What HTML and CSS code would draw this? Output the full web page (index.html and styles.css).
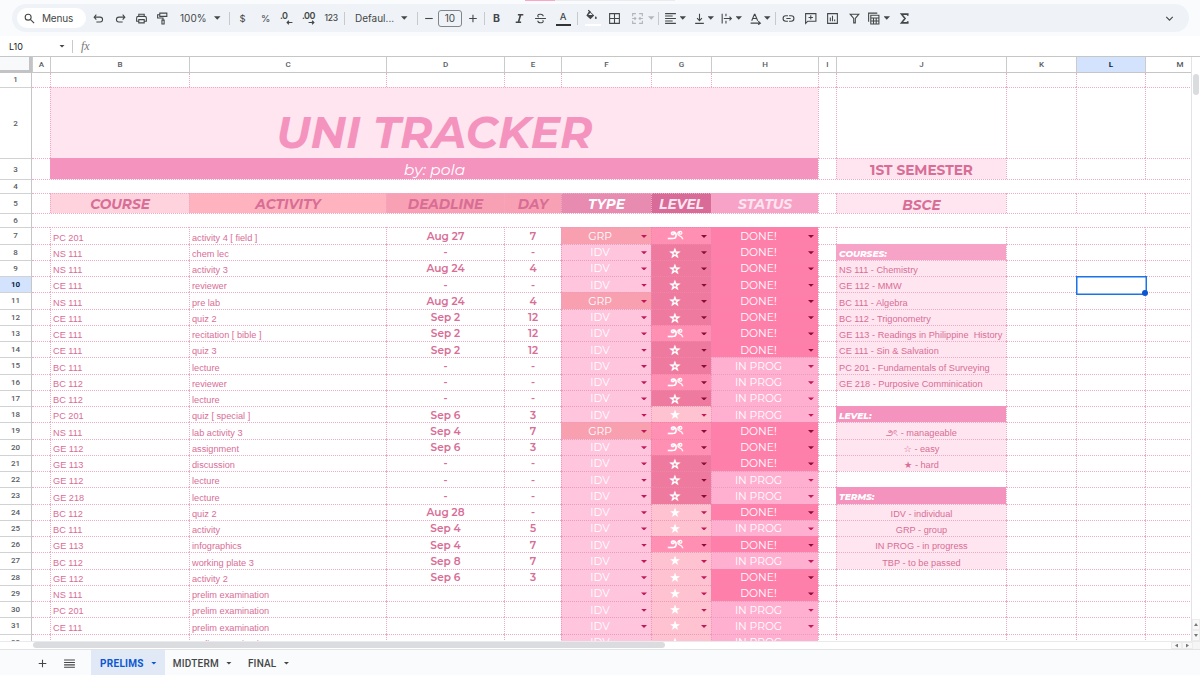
FILE: index.html
```html
<!DOCTYPE html>
<html lang="en">

<head>
    <meta charset="UTF-8">
    <meta name="viewport" content="width=device-width, initial-scale=1.0">
    <title>Uni Tracker</title>
    <link rel="stylesheet" href="styles.css">
</head>

<body>

<!-- Toolbar -->
<header class="top">
    <div class="load-bar"></div>
    <div class="toolbar">
        <div class="menus">
            <svg class="icon" viewBox="0 0 24 24"><circle cx="9.5" cy="9.5" r="5.5"/><path d="M14 14l6.5 6.5"/></svg>
            <span>Menus</span>
        </div>
        <svg class="icon" viewBox="0 0 24 24"><path d="M8 5L4 9.500l4 4.500M4.500 9.500H15a4.500 4.500 0 0 1 0 9H8"/></svg>
        <svg class="icon" viewBox="0 0 24 24"><path d="M16 5l4 4.500-4 4.500M19.500 9.500H9a4.500 4.500 0 0 0 0 9h7"/></svg>
        <svg class="icon" viewBox="0 0 24 24"><path d="M7 8V4h10v4M7 17H3v-6a3 3 0 0 1 3-3h12a3 3 0 0 1 3 3v6h-4M7 14h10v6H7z"/></svg>
        <svg class="icon" viewBox="0 0 24 24"><path d="M7 2h13v6H7zM7 5H3v6h10v4M11 15h4v7h-4z"/></svg>
        <span class="zoom">100%</span>
        <i class="arrow"></i>
        <i class="sep"></i>
        <span class="sym">$</span>
        <span class="sym">%</span>
        <span class="dec">.0<svg viewBox="0 0 12 8"><path d="M11 4H2M5 1L2 4l3 3"/></svg></span>
        <span class="dec">.00<svg viewBox="0 0 12 8"><path d="M1 4h9M7 1l3 3-3 3"/></svg></span>
        <span class="num">123</span>
        <i class="sep"></i>
        <span class="font">Defaul...</span>
        <i class="arrow"></i>
        <i class="sep"></i>
        <svg class="icon" viewBox="0 0 24 24"><path d="M4 12h14"/></svg>
        <span class="size">10</span>
        <svg class="icon" viewBox="0 0 24 24"><path d="M4 12h14M11 5v14"/></svg>
        <i class="sep"></i>
        <b class="bold">B</b>
        <svg class="icon thick" viewBox="0 0 24 24"><path d="M9 5h10M5 19h10M14 5l-4 14"/></svg>
        <svg class="icon" viewBox="0 0 24 24"><path d="M2 12h20M17 8c0-5-10-5-10-1 0 1 .5 2 1.500 2.500M7 16c0 5 10 5 10 1 0-1-.3-1.500-1-2"/></svg>
        <span class="color">A</span>
        <i class="sep"></i>
        <span class="fill"><svg class="icon" viewBox="0 0 24 24"><path class="solid" d="M8 3l9 9-7 7-7.500-7zM20 13c3 4 2 5.500 0 5.500s-3-1.500 0-5.500z"/><path d="M6 2l4 4"/><path class="hole" d="M6 11h8l-4-4z"/></svg></span>
        <svg class="icon" viewBox="0 0 24 24"><path d="M3 3h18v18H3zM12 3v18M3 12h18"/></svg>
        <svg class="icon off" viewBox="0 0 24 24"><path d="M3 8V3h6M15 3h6v5M3 16v5h6M15 21h6v-5M2 12h7M6.500 9.500L9 12l-2.500 2.500M22 12h-7M17.500 9.500L15 12l2.500 2.500"/></svg>
        <i class="arrow off"></i>
        <i class="sep"></i>
        <svg class="icon" viewBox="0 0 24 24"><path d="M2 3h20M2 7.500h14M2 12h20M2 16.500h14M2 21h20"/></svg>
        <i class="arrow"></i>
        <svg class="icon" viewBox="0 0 24 24"><path d="M4 21h16M12 3v13M7.500 11.500L12 16l4.500-4.500"/></svg>
        <i class="arrow"></i>
        <svg class="icon" viewBox="0 0 24 24"><path d="M4 3v18M11 3v5M11 16v5M7 12h14M17.500 8.500L21 12l-3.500 3.500"/></svg>
        <i class="arrow"></i>
        <svg class="icon" viewBox="0 0 24 24"><path d="M5 16l5-12h1l5 12M7 12h7M3 20.500h17M17 17l4 3.500-4 3"/></svg>
        <i class="arrow"></i>
        <i class="sep"></i>
        <svg class="icon" viewBox="0 0 24 24"><path d="M11 7H7a5 5 0 0 0 0 10h4M13 7h4a5 5 0 0 1 0 10h-4M8 12h8"/></svg>
        <svg class="icon" viewBox="0 0 24 24"><path d="M3 21V3h19v14H7zM12.500 6v8M8.500 10h8"/></svg>
        <svg class="icon" viewBox="0 0 24 24"><path d="M3 3h18v18H3zM8 10v7M12 7v10M16 14v3"/></svg>
        <svg class="icon" viewBox="0 0 24 24"><path d="M4 4h16l-6.500 8v8h-3v-8z"/></svg>
        <svg class="icon" viewBox="0 0 24 24"><path d="M3 18V2h16M7 6h15v16H7zM7 11h15M7 16.500h15M12 11v11M17 11v11"/></svg>
        <i class="arrow"></i>
        <svg class="icon sigma" viewBox="0 0 24 24"><path d="M18 7V4H6.500l6.500 8-6.500 8H18v-3"/></svg>
        <svg class="icon" viewBox="0 0 24 24"><path d="M6 9l6 6 6-6"/></svg>
    </div>
</header>

<!-- Formula bar -->
<div class="formula-bar">
    <span class="cell-name">L10</span>
    <i class="arrow"></i>
    <i class="sep"></i>
    <span class="fx">fx</span>
</div>

<!-- Sheet -->
<main class="sheet">
    <div class="grid" id="grid">
        <div class="row letters">
            <div class="corner"></div>
            <div>A</div><div>B</div><div>C</div><div>D</div><div>E</div><div>F</div><div>G</div>
            <div>H</div><div>I</div><div>J</div><div>K</div><div class="current">L</div><div>M</div>
        </div>
        <div class="row r1">
            <div class="head">1</div>
            <div></div><div></div><div></div><div></div><div></div><div></div><div></div>
            <div></div><div></div><div></div><div></div><div></div><div></div>
        </div>
        <div class="row r2">
            <div class="head">2</div>
            <div></div><div class="title"><h1>UNI TRACKER</h1></div>
            <div></div><div></div><div></div><div></div><div></div>
        </div>
        <div class="row r3">
            <div class="head">3</div>
            <div></div><div class="author">by: pola</div>
            <div></div><div class="semester">1ST SEMESTER</div><div></div><div></div><div></div>
        </div>
        <div class="row r4"><div class="head">4</div><div class="blank"></div></div>
        <div class="row r5">
            <div class="head">5</div>
            <div></div><div class="th course">COURSE</div><div class="th activity">ACTIVITY</div>
            <div class="th deadline">DEADLINE</div><div class="th deadline">DAY</div>
            <div class="th type">TYPE</div><div class="th level">LEVEL</div><div class="th status">STATUS</div>
            <div></div><div class="th program">BSCE</div><div></div><div></div><div></div>
        </div>
        <div class="row r6"><div class="head">6</div><div class="blank"></div></div>
    </div>
    <div class="v-scroll">
        <div class="v-thumb"></div>
        <div class="v-btn"><i class="up"></i></div>
        <div class="v-btn"><i class="down"></i></div>
    </div>
</main>

<div class="h-scroll">
    <div class="h-thumb"></div>
    <div class="h-btn"><i class="left"></i></div>
    <div class="h-btn"><i class="right"></i></div>
    <div class="h-end"></div>
</div>

<!-- Sheet tabs -->
<footer class="tabs">
    <svg class="icon" viewBox="0 0 24 24"><path d="M5 12h14M12 5v14"/></svg>
    <svg class="icon lines" viewBox="0 0 24 24"><path d="M2 5.500h20M2 10h20M2 14.500h20M2 19h20"/></svg>
    <div class="tab active">PRELIMS<i class="arrow"></i></div>
    <div class="tab">MIDTERM<i class="arrow"></i></div>
    <div class="tab">FINAL<i class="arrow"></i></div>
</footer>

<script>
    const BOW = '౨ৎ';

    // course, activity, deadline, day, type, level, status
    const tasks = [
        ['PC 201', 'activity 4 [ field ]', 'Aug 27', '7', 'GRP', 'bow', 'DONE!'],
        ['NS 111', 'chem lec', '-', '-', 'IDV', 'easy', 'DONE!'],
        ['NS 111', 'activity 3', 'Aug 24', '4', 'IDV', 'easy', 'DONE!'],
        ['CE 111', 'reviewer', '-', '-', 'IDV', 'easy', 'DONE!'],
        ['NS 111', 'pre lab', 'Aug 24', '4', 'GRP', 'easy', 'DONE!'],
        ['CE 111', 'quiz 2', 'Sep 2', '12', 'IDV', 'easy', 'DONE!'],
        ['CE 111', 'recitation [ bible ]', 'Sep 2', '12', 'IDV', 'bow', 'DONE!'],
        ['CE 111', 'quiz 3', 'Sep 2', '12', 'IDV', 'easy', 'DONE!'],
        ['BC 111', 'lecture', '-', '-', 'IDV', 'easy', 'IN PROG'],
        ['BC 112', 'reviewer', '-', '-', 'IDV', 'bow', 'IN PROG'],
        ['BC 112', 'lecture', '-', '-', 'IDV', 'easy', 'IN PROG'],
        ['PC 201', 'quiz [ special ]', 'Sep 6', '3', 'IDV', 'hard', 'IN PROG'],
        ['NS 111', 'lab activity 3', 'Sep 4', '7', 'GRP', 'bow', 'DONE!'],
        ['GE 112', 'assignment', 'Sep 6', '3', 'IDV', 'bow', 'DONE!'],
        ['GE 113', 'discussion', '-', '-', 'IDV', 'easy', 'DONE!'],
        ['GE 112', 'lecture', '-', '-', 'IDV', 'easy', 'IN PROG'],
        ['GE 218', 'lecture', '-', '-', 'IDV', 'easy', 'IN PROG'],
        ['BC 112', 'quiz 2', 'Aug 28', '-', 'IDV', 'hard', 'DONE!'],
        ['BC 111', 'activity', 'Sep 4', '5', 'IDV', 'hard', 'IN PROG'],
        ['GE 113', 'infographics', 'Sep 4', '7', 'IDV', 'bow', 'DONE!'],
        ['BC 112', 'working plate 3', 'Sep 8', '7', 'IDV', 'hard', 'IN PROG'],
        ['GE 112', 'activity 2', 'Sep 6', '3', 'IDV', 'hard', 'DONE!'],
        ['NS 111', 'prelim examination', '', '', 'IDV', 'hard', 'DONE!'],
        ['PC 201', 'prelim examination', '', '', 'IDV', 'hard', 'IN PROG'],
        ['CE 111', 'prelim examination', '', '', 'IDV', 'hard', 'IN PROG'],
        ['GE 112', 'prelim examination', '', '', 'IDV', 'hard', 'IN PROG']
    ];

    // Side column, keyed by row number
    const notes = {
        8: ['note-head light', 'COURSES:'],
        9: ['note', 'NS 111 - Chemistry'],
        10: ['note', 'GE 112 - MMW'],
        11: ['note', 'BC 111 - Algebra'],
        12: ['note', 'BC 112 - Trigonometry'],
        13: ['note', 'GE 113 - Readings in Philippine  History'],
        14: ['note', 'CE 111 - Sin & Salvation'],
        15: ['note', 'PC 201 - Fundamentals of Surveying'],
        16: ['note', 'GE 218 - Purposive Comminication'],
        18: ['note-head', 'LEVEL:'],
        19: ['note center', BOW + ' - manageable'],
        20: ['note center', '☆ - easy'],
        21: ['note center', '★ - hard'],
        23: ['note-head', 'TERMS:'],
        24: ['note center', 'IDV - individual'],
        25: ['note center', 'GRP - group'],
        26: ['note center', 'IN PROG - in progress'],
        27: ['note center', 'TBP - to be passed']
    };

    const levels = { bow: BOW, easy: '☆', hard: '★' };
    const grid = document.getElementById('grid');

    function addCell(row, className, text) {
        const cell = document.createElement('div');
        cell.className = className;
        const label = document.createElement('span');
        label.textContent = text;
        cell.appendChild(label);
        row.appendChild(cell);
        return cell;
    }

    function addDropdown(row, className, text) {
        const cell = addCell(row, 'drop ' + className, text);
        const arrow = document.createElement('i');
        arrow.className = 'arrow';
        cell.appendChild(arrow);
    }

    tasks.forEach((task, i) => {
        const number = i + 7;
        const row = document.createElement('div');
        row.className = 'row task';

        addCell(row, number === 10 ? 'head current' : 'head', number);
        addCell(row, '', '');
        addCell(row, 'text', task[0]);
        addCell(row, 'text', task[1]);
        addCell(row, 'date', task[2]);
        addCell(row, 'date', task[3]);
        addDropdown(row, task[4].toLowerCase(), task[4]);
        addDropdown(row, task[5], levels[task[5]]);
        addDropdown(row, task[6] === 'DONE!' ? 'done' : 'prog', task[6]);
        addCell(row, '', '');
        const note = notes[number] || ['', ''];
        addCell(row, note[0], note[1]);
        addCell(row, '', '');
        addCell(row, number === 10 ? 'selected' : '', '');
        addCell(row, '', '');

        grid.appendChild(row);
    });
</script>

</body>

</html>
```
FILE: styles.css
```css
* {
    margin: 0;
    padding: 0;
    box-sizing: border-box;
}

body {
    width: 1200px;
    height: 675px;
    overflow: hidden;
    display: flex;
    flex-direction: column;
    background-color: #fff;
    font-family: Montserrat, Inter, sans-serif;
    color: #444746;
}

.icon {
    display: block;
    width: 13px;
    height: 13px;
    margin-left: -1.5px;
    fill: none;
    stroke: #444746;
    stroke-width: 2;
}

.icon.thick {
    stroke-width: 3;
}

.icon.sigma {
    margin-left: -3px;
    stroke-width: 3;
}

.icon .solid {
    fill: #444746;
    stroke: none;
}

.icon .hole {
    fill: #edf2fa;
    stroke: none;
}

.arrow {
    display: block;
    width: 6px;
    height: 3px;
    background-color: #444746;
    clip-path: polygon(0 0, 100% 0, 50% 100%);
}

.off {
    opacity: 0.35;
}

.sep {
    display: block;
    width: 1px;
    height: 13px;
    background-color: #c7c9cc;
}

/* Toolbar */
.top {
    height: 36px;
    flex: none;
    background-color: #f9fbfd;
}

.load-bar {
    width: 150px;
    height: 1px;
    margin-left: 525px;
    background: linear-gradient(to right, #fba6c8 30px, #e9ebee 30px);
}

.toolbar {
    width: 1177px;
    height: 28px;
    margin: 3px 0 0 12px;
    padding-left: 5px;
    border-radius: 14px;
    background-color: #eff3f8;
    display: grid;
    align-items: center;
    grid-template-columns:
        76px 22px 21px 21px 23px 34px 15px 10.5px 21.5px 19px 22px 22.5px 19.5px
        11px 46px 16px 7.5px 13.5px 30px 16px 9px 21px 21px 20.5px 21.5px
        8px 24px 23px 16px 10px 7.5px 14px 14.5px 13.5px 13.5px 14.5px 14.5px 14px 11px
        8px 22px 22px 22px 19.5px 15px 17.5px 263.5px 20px;
    font-family: Inter, sans-serif;
    font-size: 10px;
    white-space: nowrap;
}

.toolbar > .arrow {
    width: 6.5px;
    height: 3.5px;
}

.menus {
    width: 69px;
    height: 20px;
    border-radius: 10px;
    background-color: #fff;
    display: flex;
    align-items: center;
    padding-left: 6px;
    gap: 6px;
    letter-spacing: -0.2px;
}

.menus .icon {
    margin-left: 0;
}

.sym {
    font-size: 9.5px;
}

.num {
    font-size: 8.5px;
    letter-spacing: -0.3px;
    font-weight: 500;
}

.dec {
    font-size: 9px;
    font-weight: 600;
    height: 15px;
    line-height: 10px;
    width: 13px;
    letter-spacing: -0.5px;
    display: flex;
    flex-direction: column;
    align-items: flex-start;
}

.dec svg {
    width: 7px;
    height: 5px;
    margin: -1px 0 0 6px;
    fill: none;
    stroke: #444746;
    stroke-width: 2;
}

.size {
    width: 24px;
    height: 17px;
    border: 1px solid #80868b;
    border-radius: 3px;
    line-height: 15px;
    text-align: center;
}

.bold {
    font-size: 10.5px;
}

.color {
    width: 15px;
    height: 15px;
    border-bottom: 2px solid #333;
    font-size: 9.5px;
    font-weight: 500;
    line-height: 12px;
    text-align: center;
}

.fill {
    width: 16px;
    height: 15px;
    border-bottom: 2px solid #fff;
}

.fill .icon {
    margin: -2px 0 0 0;
}

/* Formula bar */
.formula-bar {
    height: 20px;
    flex: none;
    display: flex;
    align-items: center;
    padding-left: 9px;
    font-family: Inter, sans-serif;
    font-size: 9px;
    color: #222;
}

.cell-name {
    width: 50px;
    letter-spacing: -0.1px;
}

.formula-bar .sep {
    margin: 0 8px 0 7px;
}

.fx {
    font: italic 12px "Liberation Serif", serif;
    color: #777;
}

/* Sheet */
.sheet {
    height: 585px;
    flex: none;
    display: flex;
    overflow: hidden;
    border-top: 1px solid #c4c7c5;
}

.grid {
    width: 1191px;
    flex: none;
    overflow: hidden;
}

.row {
    display: grid;
    grid-template-columns: 32px 18px 139px 197px 118px 57px 90px 60px 107px 18px 170px 70px 69px 69px;
}

.row > div {
    border-left: 1px dotted #f2a9c4;
    border-top: 1px dotted #f2a9c4;
    display: flex;
    align-items: center;
    justify-content: center;
    overflow: hidden;
    white-space: pre;
    min-width: 0;
}

.row > div:nth-child(2) {
    border-left: none;
}

.row.letters {
    height: 16px;
}

.row.letters > div {
    border-top: none;
    border-left: 1px solid #c9cbcd;
    border-bottom: 1px solid #c4c7c5;
    font: 500 8px Roboto, sans-serif;
    color: #575b5f;
}

.row.letters > .corner {
    border-left: none;
    border-right: 3px solid #c3c3c5;
    border-bottom: 3px solid #c3c3c5;
    background-color: #f8f9fa;
}

.row.letters > .current,
.row > .head.current {
    background-color: #d3e3fd;
    color: #041e49;
    font-weight: 700;
}

.row > .head {
    border-left: none;
    border-top: 1px solid #d0d2d4;
    border-right: 1px solid #c4c7c5;
    font: 500 8px Roboto, sans-serif;
    color: #575b5f;
}

.r1 {
    height: 14px;
}

.r1 > div,
.row.r1 > .head {
    border-top: none;
    padding-bottom: 1px;
}

.r2 {
    height: 71px;
}

.r3 {
    height: 21px;
}

.r4 {
    height: 14px;
}

.r5 {
    height: 20px;
}

.r6 {
    height: 14.25px;
}

.blank {
    grid-column: 2 / -1;
}

.title,
.author {
    grid-column: 3 / 10;
}

.row > .title {
    background-color: #ffe5ef;
    align-items: flex-end;
}

.title h1 {
    font-size: 44px;
    line-height: 52px;
    font-style: italic;
    font-weight: 700;
    color: #f494be;
}

.row > .author {
    background-color: #f493be;
    border-color: #f493be;
    color: #fff;
    font-size: 15.6px;
    font-style: italic;
}

.semester,
.program {
    background-color: #ffe5ef;
    color: #d86d96;
    font-size: 13.7px;
    font-weight: 700;
}

.row > .semester {
    padding-top: 2px;
}

.row > .th {
    font-size: 13.7px;
    font-weight: 700;
    font-style: italic;
    color: #d86d96;
}

.row > .program {
    padding-top: 2px;
}

.course { background-color: #ffd3dd; }
.activity { background-color: #ffb3bf; }
.deadline { background-color: #f8a1b4; }
.type { background-color: #e88bb0; }
.level { background-color: #d96b98; }
.status { background-color: #f7a3c7; }

.row > .type { color: #fff; }
.row > .level,
.row > .status { color: #ffe5ef; }

/* Tasks */
.task {
    height: 16.25px;
}

.task > .text,
.task > .note {
    justify-content: flex-start;
    align-items: flex-end;
    padding-left: 2px;
    font: 9.2px/12px "Liberation Sans", sans-serif;
    color: #d86d96;
}

.task > .note {
    background-color: #ffe5ef;
}

.task > .note.center {
    justify-content: center;
    padding-left: 0;
    font-family: "Liberation Sans", "DejaVu Sans", sans-serif;
}

.task > .note-head {
    justify-content: flex-start;
    padding: 2px 0 0 2px;
    background-color: #f493be;
    border-color: #f493be;
    color: #fff;
    font-size: 9px;
    font-weight: 800;
    font-style: italic;
}

.task > .note-head.light {
    background-color: #f6a3c7;
    border-color: #f6a3c7;
}

.task > .date {
    padding-top: 1px;
    font-size: 10.5px;
    font-weight: 600;
    color: #d86d96;
}

.task > .drop {
    padding-top: 1px;
    color: #fff;
    font-size: 10.7px;
    border-color: #ee9bbb;
}

.task > .done,
.task > .bow,
.task > .easy {
    border-color: #f084a9;
}

.drop span {
    flex: 1;
    text-align: center;
}

.drop .arrow {
    width: 6px;
    margin: 0 4px 0 3px;
    background-color: #c2185b;
}

.task > .bow span {
    font-size: 12px;
    font-weight: 700;
}

.drop.easy span,
.drop.hard span {
    font-family: "DejaVu Sans", sans-serif;
    font-size: 13px;
    line-height: 14px;
    font-weight: 700;
}

.drop.easy span {
    font-size: 11.5px;
    -webkit-text-stroke: 0.8px #fff;
}

.idv { background-color: #fec5dd; }
.grp { background-color: #f8a0b0; }
.bow { background-color: #ff8fb3; }
.easy { background-color: #ee7b9f; }
.hard { background-color: #ffc2d0; }
.done { background-color: #ff7fab; }
.prog { background-color: #ffb0d0; }

.done .arrow,
.bow .arrow,
.easy .arrow {
    background-color: #8a0c3a;
}

.task > .selected {
    position: relative;
    overflow: visible;
}

.selected::before {
    content: "";
    position: absolute;
    left: -1px;
    top: -1px;
    width: 69px;
    height: 17px;
    border: 1px solid #1a73e8;
    box-shadow: inset 0 0 0 0.5px #1a73e8;
    background-color: #fff;
    z-index: 1;
}

.selected::after {
    content: "";
    position: absolute;
    right: -3px;
    bottom: -4px;
    width: 6px;
    height: 6px;
    border-radius: 50%;
    background-color: #0b57d0;
    z-index: 2;
}

/* Scrollbars */
.v-scroll {
    width: 9px;
    border-left: 1px solid #e1e3e5;
    display: flex;
    flex-direction: column;
    background-color: #fff;
}

.v-thumb {
    width: 6px;
    height: 21px;
    margin: 17px 0 auto 1px;
    border-radius: 3px;
    background-color: #dadce0;
}

.v-btn,
.h-btn {
    background-color: #f8f8f8;
    border: 1px solid #ececec;
    display: flex;
    align-items: center;
    justify-content: center;
}

.v-btn {
    height: 11px;
}

.up,
.down {
    width: 4px;
    height: 3px;
    background-color: #777;
}

.up { clip-path: polygon(50% 0, 100% 100%, 0 100%); }
.down { clip-path: polygon(0 0, 100% 0, 50% 100%); }

.left,
.right {
    width: 3px;
    height: 4px;
    background-color: #777;
}

.left { clip-path: polygon(100% 0, 100% 100%, 0 50%); }
.right { clip-path: polygon(0 0, 100% 50%, 0 100%); }

.h-scroll {
    height: 9px;
    flex: none;
    display: flex;
    border-top: 1px solid #e8eaed;
    border-bottom: 1px solid #e1e3e5;
}

.h-thumb {
    width: 632px;
    height: 6px;
    margin: 0 auto 0 33px;
    border-radius: 3px;
    background-color: #dadce0;
}

.h-btn {
    width: 11px;
}

.h-end {
    width: 7px;
    background-color: #f5f5f5;
}

/* Tabs */
.tabs {
    flex: 1;
    display: flex;
    background-color: #f9fbfd;
    padding-left: 36px;
}

.tabs .icon {
    margin: 7px 0 0 0;
}

.tabs .lines {
    margin: 7px 15px 0 14px;
}

.tab {
    height: 25px;
    padding: 1px 8px 0;
    display: flex;
    align-items: center;
    gap: 7px;
    font: 500 10px Roboto, sans-serif;
    letter-spacing: 0.2px;
}

.tab.active {
    padding-left: 9px;
    background-color: #e1e9f7;
    color: #0b57d0;
    font-weight: 700;
    letter-spacing: 0.3px;
}

.tab.active .arrow {
    background-color: #0b57d0;
}
```
